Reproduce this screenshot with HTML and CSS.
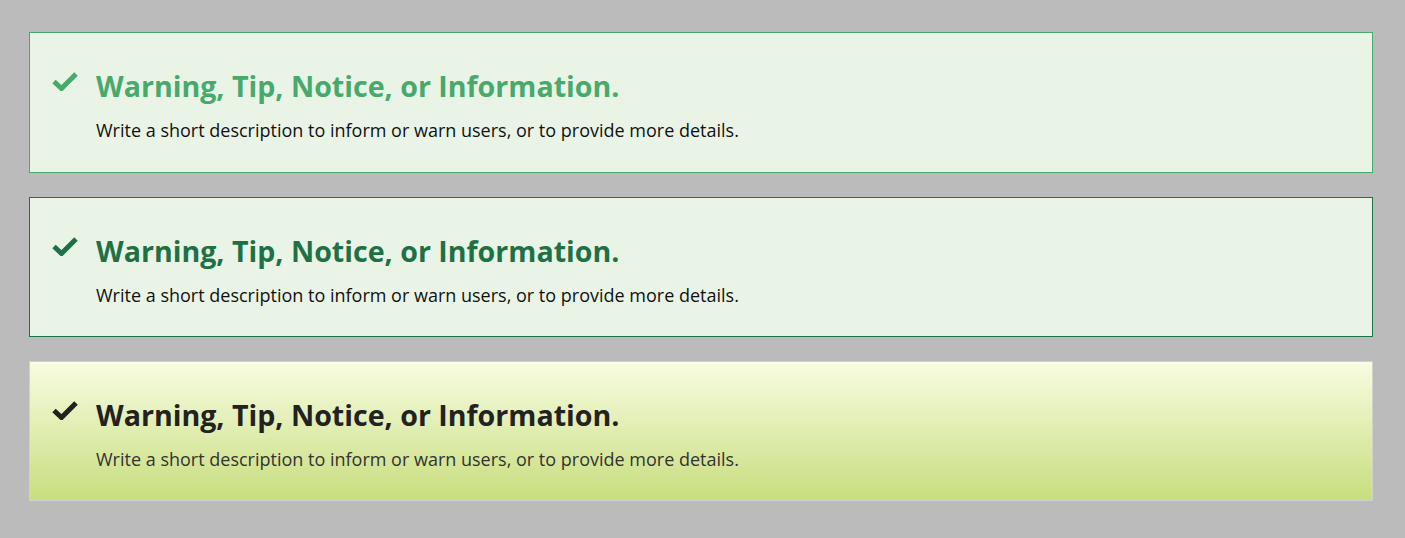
FILE: index.html
```html
<!DOCTYPE html>
<html>
<head>
<meta charset="utf-8">
<link rel="stylesheet" href="styles.css">
</head>
<body>
<div class="stack">
  <div class="alert alert-light">
    <svg class="icon" viewBox="0 0 26 20"><path d="M2 10.5 L9.5 17.5 L24 3" fill="none" stroke="currentColor" stroke-width="5" stroke-linejoin="miter"/></svg>
    <div class="content">
      <h2 class="title">Warning, Tip, Notice, or Information.</h2>
      <p class="desc">Write a short description to inform or warn users, or to provide more details.</p>
    </div>
  </div>
  <div class="alert alert-dark">
    <svg class="icon" viewBox="0 0 26 20"><path d="M2 10.5 L9.5 17.5 L24 3" fill="none" stroke="currentColor" stroke-width="5" stroke-linejoin="miter"/></svg>
    <div class="content">
      <h2 class="title">Warning, Tip, Notice, or Information.</h2>
      <p class="desc">Write a short description to inform or warn users, or to provide more details.</p>
    </div>
  </div>
  <div class="alert alert-gradient">
    <svg class="icon" viewBox="0 0 26 20"><path d="M2 10.5 L9.5 17.5 L24 3" fill="none" stroke="currentColor" stroke-width="5" stroke-linejoin="miter"/></svg>
    <div class="content">
      <h2 class="title">Warning, Tip, Notice, or Information.</h2>
      <p class="desc">Write a short description to inform or warn users, or to provide more details.</p>
    </div>
  </div>
</div>
</body>
</html>
```
FILE: styles.css
```css
html, body { margin: 0; padding: 0; }
body {
  background: #bbbbbb;
  font-family: "Open Sans", "Noto Sans", sans-serif;
}
.stack {
  display: flex;
  flex-direction: column;
  gap: 24px;
  width: 1344px;
  padding: 32px 0 0 29px;
}
.alert {
  box-sizing: border-box;
  height: 140px;
  display: flex;
  align-items: flex-start;
  padding: 37px 20px 0 22px;
  border: 1px solid;
}
.alert-light { height: 141px; }
.icon {
  width: 26px;
  height: 20px;
  flex: none;
  margin-top: 1px;
}
.content { margin-left: 18px; }
.title {
  margin: 0;
  font-size: 28.6px;
  font-weight: 700;
  line-height: 32px;
}
.desc {
  margin: 16px 0 0;
  font-size: 18px;
  line-height: 24px;
  color: #111;
}
.alert-light {
  background: #eaf4e6;
  border-color: #48a96c;
  color: #48a96c;
}
.alert-dark {
  background: #eaf4e6;
  border-color: #1e7145;
  color: #1e7145;
}
.alert-gradient {
  background: linear-gradient(to bottom, #f8fce2, #c8de7e);
  border-color: #d0d0d0;
  color: #222222;
}
.alert-gradient .desc { color: #333; }
```
